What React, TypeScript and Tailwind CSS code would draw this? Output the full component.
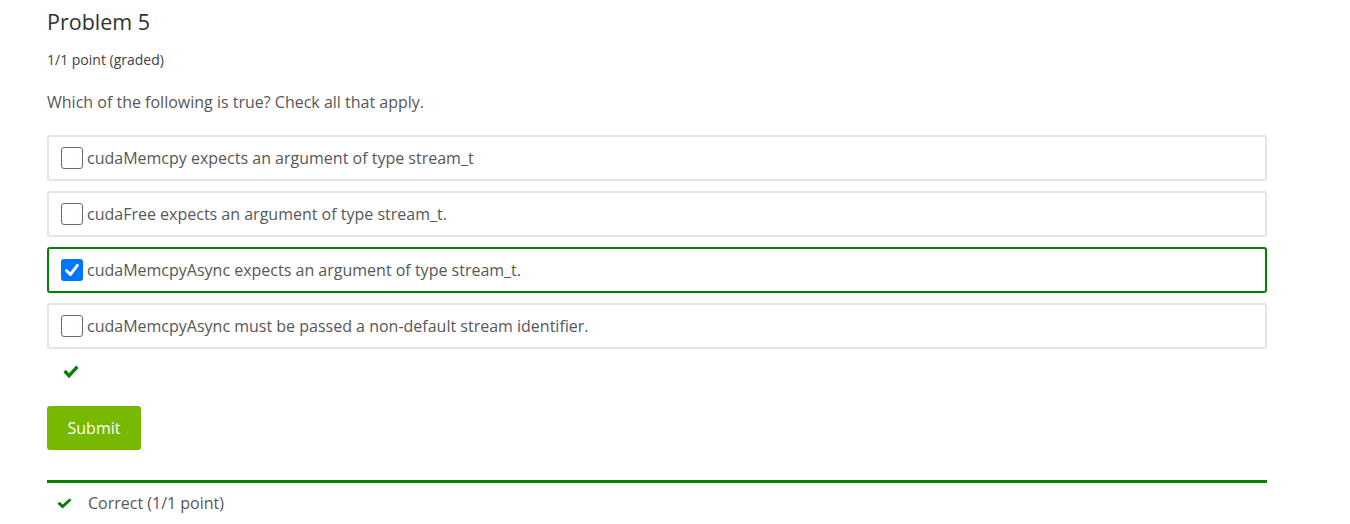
import React from 'react';

const options = [
  { label: 'cudaMemcpy expects an argument of type stream_t', checked: false },
  { label: 'cudaFree expects an argument of type stream_t.', checked: false },
  { label: 'cudaMemcpyAsync expects an argument of type stream_t.', checked: true },
  { label: 'cudaMemcpyAsync must be passed a non-default stream identifier.', checked: false },
];

function Tick({ className }: { className?: string }) {
  return (
    <svg viewBox="0 0 16 13" className={className} fill="currentColor" preserveAspectRatio="none">
      <path d="M0.5 6.8 L2.8 4.5 L6 7.7 L13.2 0.5 L15.5 2.8 L6 12.3 Z" />
    </svg>
  );
}

function Box({ checked }: { checked: boolean }) {
  if (checked) {
    return (
      <span className="flex h-[22px] w-[22px] shrink-0 items-center justify-center rounded-[3px] bg-[#0075ff]">
        <svg viewBox="0 0 16 16" className="h-[18px] w-[18px]" fill="none" stroke="white" strokeWidth="2.6" strokeLinecap="round" strokeLinejoin="round">
          <path d="M3.2 8.6 L6.6 12 L12.8 3.8" />
        </svg>
      </span>
    );
  }
  return <span className="block h-[22px] w-[22px] shrink-0 rounded-[3px] border border-[#6b6b6b] bg-white" />;
}

export default function App() {
  return (
    <div className="min-h-screen bg-white font-['Open_Sans',sans-serif]">
      <div className="ml-[47px] w-[1220px] pt-[7px]">
        <h2 className="text-[21.5px] leading-[30px] text-[#313131]">Problem 5</h2>
        <div className="mt-[14px] text-[14px] leading-[18px] text-[#414141]">1/1 point (graded)</div>
        <p className="mt-[21px] text-[16px] leading-[24px] text-[#575757]">
          Which of the following is true? Check all that apply.
        </p>

        <div className="mt-[21px] flex flex-col gap-[10px]">
          {options.map((o) => (
            <label
              key={o.label}
              className={
                'flex h-[46px] items-center gap-[4px] rounded-[3px] border-2 pl-[12px] text-[16px] text-[#575757] ' +
                (o.checked ? 'border-[#008100]' : 'border-[#e4e4e4]')
              }
            >
              <Box checked={o.checked} />
              <span>{o.label}</span>
            </label>
          ))}
        </div>

        <div className="mt-[16px] pl-[16px] text-[#008100]">
          <Tick className="h-[14px] w-[16px]" />
        </div>

        <button className="mt-[27px] h-[44px] w-[94px] rounded-[3px] bg-[#76b900] text-[16px] text-white">
          Submit
        </button>

        <div className="mt-[30px] h-[3px] bg-[#008100]" />

        <div className="mt-[8px] flex items-center pl-[10px] text-[16px] text-[#575757]">
          <Tick className="h-[11px] w-[15px] text-[#008100]" />
          <span className="ml-[16px]">Correct (1/1 point)</span>
        </div>
      </div>
    </div>
  );
}
